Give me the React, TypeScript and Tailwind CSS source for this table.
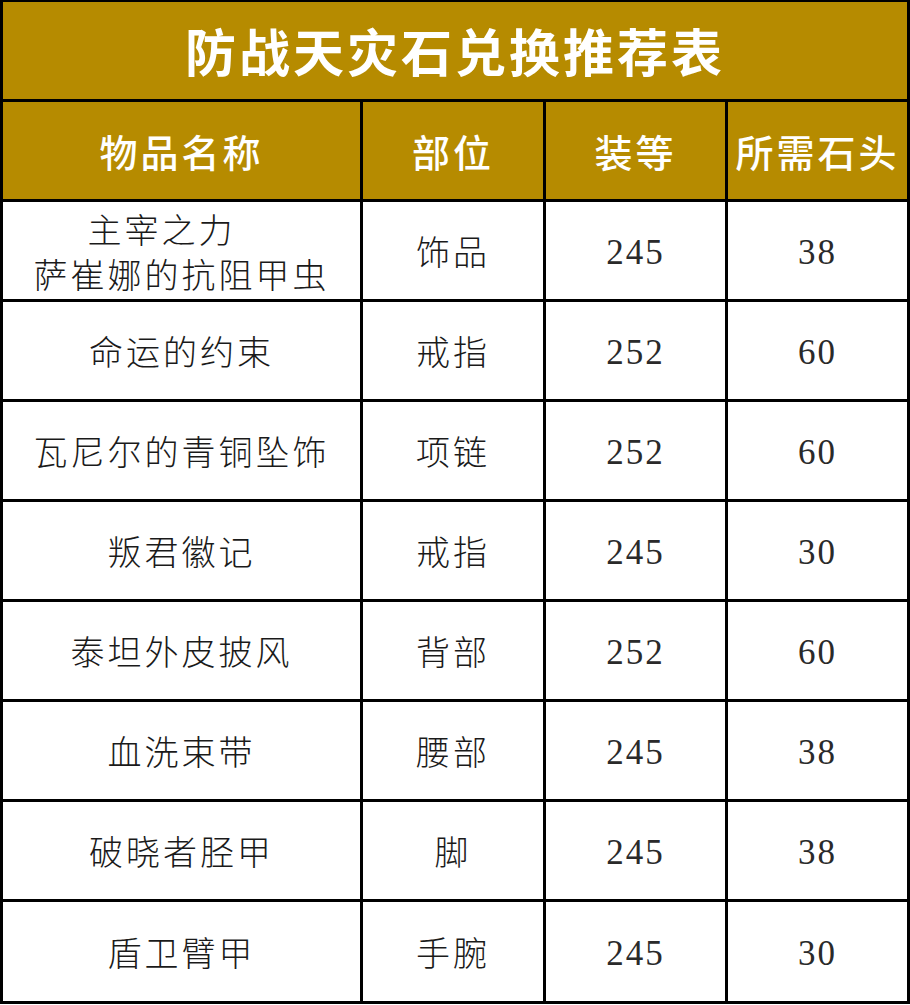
const rows: { name: string[]; part: string; ilvl: string; cost: string }[] = [
  { name: ['主宰之力', '萨崔娜的抗阻甲虫'], part: '饰品', ilvl: '245', cost: '38' },
  { name: ['命运的约束'], part: '戒指', ilvl: '252', cost: '60' },
  { name: ['瓦尼尔的青铜坠饰'], part: '项链', ilvl: '252', cost: '60' },
  { name: ['叛君徽记'], part: '戒指', ilvl: '245', cost: '30' },
  { name: ['泰坦外皮披风'], part: '背部', ilvl: '252', cost: '60' },
  { name: ['血洗束带'], part: '腰部', ilvl: '245', cost: '38' },
  { name: ['破晓者胫甲'], part: '脚', ilvl: '245', cost: '38' },
  { name: ['盾卫臂甲'], part: '手腕', ilvl: '245', cost: '30' },
];

const cjk = "font-['Noto_Sans_CJK_SC',sans-serif]";

export default function App() {
  return (
    <div className="w-[910px] h-[1005px] bg-white">
      <div className="grid grid-cols-[357px_180px_179px_179px] gap-[3px] bg-black px-[3px] pt-[2px] pb-[3px]">
        <div
          className={`col-span-4 h-[97px] bg-[#b68b00] flex items-center justify-center text-white text-[51px] font-bold tracking-[3px] ${cjk}`}
        >
          防战天灾石兑换推荐表
        </div>
        {['物品名称', '部位', '装等', '所需石头'].map((h) => (
          <div
            key={h}
            className={`h-[97px] bg-[#b68b00] flex items-center justify-center text-white text-[38px] font-medium tracking-[3px] ${cjk}`}
          >
            {h}
          </div>
        ))}
        {rows.map((r, i) => {
          const h = i === rows.length - 1 ? 'h-[99px]' : 'h-[97px]';
          return (
            <div key={i} className="contents">
              <div
                className={`${h} bg-white flex flex-col items-center justify-center text-[#1a1a1a] text-[34px] font-light tracking-[3px] leading-[45px] ${cjk}`}
              >
                {r.name.length > 1 ? (
                  <>
                    <span className="pr-[40px]">{r.name[0]}</span>
                    <span>{r.name[1]}</span>
                  </>
                ) : (
                  <span>{r.name[0]}</span>
                )}
              </div>
              <div
                className={`${h} bg-white flex items-center justify-center text-[#1a1a1a] text-[34px] font-light tracking-[3px] ${cjk}`}
              >
                {r.part}
              </div>
              <div
                className={`${h} bg-white flex items-center justify-center pt-[5px] text-[#2a2a2a] text-[35px] tracking-[2px] font-['Liberation_Serif',serif]`}
              >
                {r.ilvl}
              </div>
              <div
                className={`${h} bg-white flex items-center justify-center pt-[5px] text-[#2a2a2a] text-[35px] tracking-[2px] font-['Liberation_Serif',serif]`}
              >
                {r.cost}
              </div>
            </div>
          );
        })}
      </div>
    </div>
  );
}
